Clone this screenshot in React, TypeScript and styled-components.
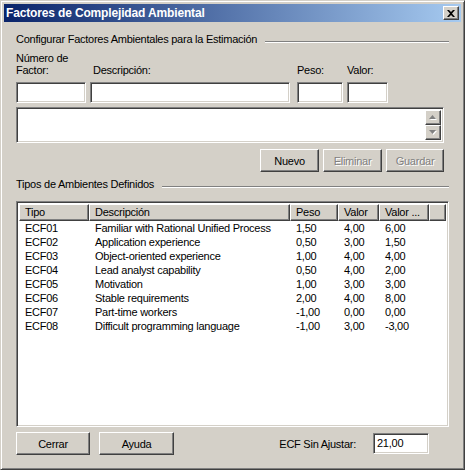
import React from 'react'
import styled, { createGlobalStyle, css } from 'styled-components'

const FACE = '#d4d0c8'
const SHADOW = '#808080'
const DARK = '#404040'

const GlobalStyle = createGlobalStyle`
  body {
    margin: 0;
    font-family: "Liberation Sans", Arial, sans-serif;
    font-size: 11px;
    letter-spacing: -0.25px;
    color: #000;
  }
`

const raised = css`
  border: 1px solid;
  border-color: #fff ${DARK} ${DARK} #fff;
  box-shadow: inset -1px -1px 0 ${SHADOW}, inset 1px 1px 0 ${FACE};
`

const sunken = css`
  border: 1px solid;
  border-color: ${SHADOW} #fff #fff ${SHADOW};
  box-shadow: inset 1px 1px 0 ${DARK}, inset -1px -1px 0 ${FACE};
`

const Window = styled.div`
  width: 465px;
  height: 470px;
  box-sizing: border-box;
  background: ${FACE};
  border: 1px solid;
  border-color: ${FACE} ${DARK} ${DARK} ${FACE};
  box-shadow: inset 1px 1px 0 #fff, inset -1px -1px 0 ${SHADOW};
  padding: 3px;
  display: flex;
  flex-direction: column;
`

const TitleBar = styled.div`
  height: 18px;
  display: flex;
  align-items: center;
  justify-content: space-between;
  padding: 0 2px 0 2px;
  background: linear-gradient(to right, #0a246a, #a6caf0);
  color: #fff;
  font-weight: bold;
  font-size: 12px;
  letter-spacing: -0.15px;
`

const CloseButton = styled.div`
  ${raised};
  box-sizing: border-box;
  width: 16px;
  height: 14px;
  background: ${FACE};
  display: flex;
  align-items: center;
  justify-content: center;
`

const Content = styled.div`
  flex: 1;
  display: flex;
  flex-direction: column;
  padding: 0 12px;
`

const Heading = styled.div<{ $top: number }>`
  margin-top: ${(p) => p.$top}px;
  height: 13px;
  line-height: 13px;
  display: flex;
  gap: 8px;
  white-space: nowrap;
`

const EtchedLine = styled.div`
  flex: 1;
  margin-top: 8px;
  height: 0;
  border-top: 1px solid ${SHADOW};
  border-bottom: 1px solid #fff;
`

const FieldRow = styled.div`
  margin-top: 6px;
  display: flex;
`

const Field = styled.div<{ $width: number; $left: number }>`
  width: ${(p) => p.$width}px;
  margin-left: ${(p) => p.$left}px;
  display: flex;
  flex-direction: column;
`

const Label = styled.div<{ $indent?: number }>`
  height: 24px;
  line-height: 12px;
  display: flex;
  flex-direction: column;
  justify-content: flex-end;
  padding-left: ${(p) => p.$indent ?? 0}px;
  margin-bottom: 6px;
`

const TextBox = styled.div<{ $height?: number }>`
  ${sunken};
  box-sizing: border-box;
  height: ${(p) => p.$height ?? 21}px;
  background: #fff;
  padding: 2px 3px;
  line-height: 15px;
`

const MemoBox = styled.div`
  ${sunken};
  box-sizing: border-box;
  margin-top: 4px;
  width: 428px;
  height: 36px;
  background: #fff;
  display: flex;
  justify-content: flex-end;
  padding: 2px;
`

const ScrollColumn = styled.div`
  width: 16px;
  display: flex;
  flex-direction: column;
`

const ScrollButton = styled.div`
  ${raised};
  box-sizing: border-box;
  height: 16px;
  background: ${FACE};
  display: flex;
  align-items: center;
  justify-content: center;
`

const ButtonRow = styled.div`
  margin-top: 6px;
  margin-right: 5px;
  display: flex;
  justify-content: flex-end;
  gap: 4px;
`

const Button = styled.div<{ $width: number; $disabled?: boolean }>`
  ${raised};
  box-sizing: border-box;
  width: ${(p) => p.$width}px;
  height: 23px;
  background: ${FACE};
  display: flex;
  align-items: center;
  justify-content: center;
  color: ${(p) => (p.$disabled ? SHADOW : '#000')};
  text-shadow: ${(p) => (p.$disabled ? '1px 1px 0 #fff' : 'none')};
`

const ListView = styled.div`
  ${sunken};
  box-sizing: border-box;
  margin-top: 10px;
  height: 226px;
  background: #fff;
  padding: 2px;
  display: flex;
  flex-direction: column;
`

const columns = '70px 201px 48px 41px 50px 1fr'

const HeaderRow = styled.div`
  display: grid;
  grid-template-columns: ${columns};
  height: 17px;
`

const HeaderCell = styled.div`
  ${raised};
  box-sizing: border-box;
  background: ${FACE};
  padding-left: 5px;
  line-height: 15px;
  white-space: nowrap;
  overflow: hidden;
`

const Row = styled.div`
  display: grid;
  grid-template-columns: ${columns};
  height: 14px;
  line-height: 14px;
`

const Cell = styled.div`
  padding-left: 6px;
  white-space: nowrap;
`

const Footer = styled.div`
  margin-top: 5px;
  display: flex;
  align-items: center;
`

const Spacer = styled.div`
  flex: 1;
`

const FooterLabel = styled.span`
  margin-right: 17px;
`

const rows = [
  ['ECF01', 'Familiar with Rational Unified Process', '1,50', '4,00', '6,00'],
  ['ECF02', 'Application experience', '0,50', '3,00', '1,50'],
  ['ECF03', 'Object-oriented experience', '1,00', '4,00', '4,00'],
  ['ECF04', 'Lead analyst capability', '0,50', '4,00', '2,00'],
  ['ECF05', 'Motivation', '1,00', '3,00', '3,00'],
  ['ECF06', 'Stable requirements', '2,00', '4,00', '8,00'],
  ['ECF07', 'Part-time workers', '-1,00', '0,00', '0,00'],
  ['ECF08', 'Difficult programming language', '-1,00', '3,00', '-3,00'],
]

function Arrow({ up }: { up?: boolean }) {
  const points = up ? '3.5,0 7,4 0,4' : '0,0 7,0 3.5,4'
  return (
    <svg width="8" height="5" viewBox="0 0 8 5">
      <polygon points={points} transform="translate(1 1)" fill="#fff" />
      <polygon points={points} fill={SHADOW} />
    </svg>
  )
}

export default function App() {
  return (
    <>
      <GlobalStyle />
      <Window>
        <TitleBar>
          <span>Factores de Complejidad Ambiental</span>
          <CloseButton>
            <svg width="8" height="7" viewBox="0 0 8 7">
              <path d="M0 0h2l2 2 2-2h2L5 3.5 8 7H6L4 5 2 7H0l3-3.5z" fill="#000" />
            </svg>
          </CloseButton>
        </TitleBar>

        <Content>
          <Heading $top={11}>
            <span>Configurar Factores Ambientales para la Estimación</span>
            <EtchedLine />
          </Heading>

          <FieldRow>
            <Field $width={70} $left={0}>
              <Label>
                <span>Número de</span>
                <span>Factor:</span>
              </Label>
              <TextBox />
            </Field>
            <Field $width={200} $left={4}>
              <Label $indent={3}>Descripción:</Label>
              <TextBox />
            </Field>
            <Field $width={46} $left={7}>
              <Label>Peso:</Label>
              <TextBox />
            </Field>
            <Field $width={41} $left={4}>
              <Label>Valor:</Label>
              <TextBox />
            </Field>
          </FieldRow>

          <MemoBox>
            <ScrollColumn>
              <ScrollButton><Arrow up /></ScrollButton>
              <ScrollButton><Arrow /></ScrollButton>
            </ScrollColumn>
          </MemoBox>

          <ButtonRow>
            <Button $width={59}>Nuevo</Button>
            <Button $width={59} $disabled>Eliminar</Button>
            <Button $width={58} $disabled>Guardar</Button>
          </ButtonRow>

          <Heading $top={6}>
            <span>Tipos de Ambientes Definidos</span>
            <EtchedLine />
          </Heading>

          <ListView>
            <HeaderRow>
              <HeaderCell>Tipo</HeaderCell>
              <HeaderCell>Descripción</HeaderCell>
              <HeaderCell>Peso</HeaderCell>
              <HeaderCell>Valor</HeaderCell>
              <HeaderCell>Valor ...</HeaderCell>
              <HeaderCell />
            </HeaderRow>
            {rows.map((r) => (
              <Row key={r[0]}>
                {r.map((c, i) => (
                  <Cell key={i}>{c}</Cell>
                ))}
              </Row>
            ))}
          </ListView>

          <Footer>
            <Button $width={74}>Cerrar</Button>
            <Button $width={75} style={{ marginLeft: 9 }}>Ayuda</Button>
            <Spacer />
            <FooterLabel>ECF Sin Ajustar:</FooterLabel>
            <TextBox style={{ width: 56, marginRight: 20 }}>21,00</TextBox>
          </Footer>
        </Content>
      </Window>
    </>
  )
}
